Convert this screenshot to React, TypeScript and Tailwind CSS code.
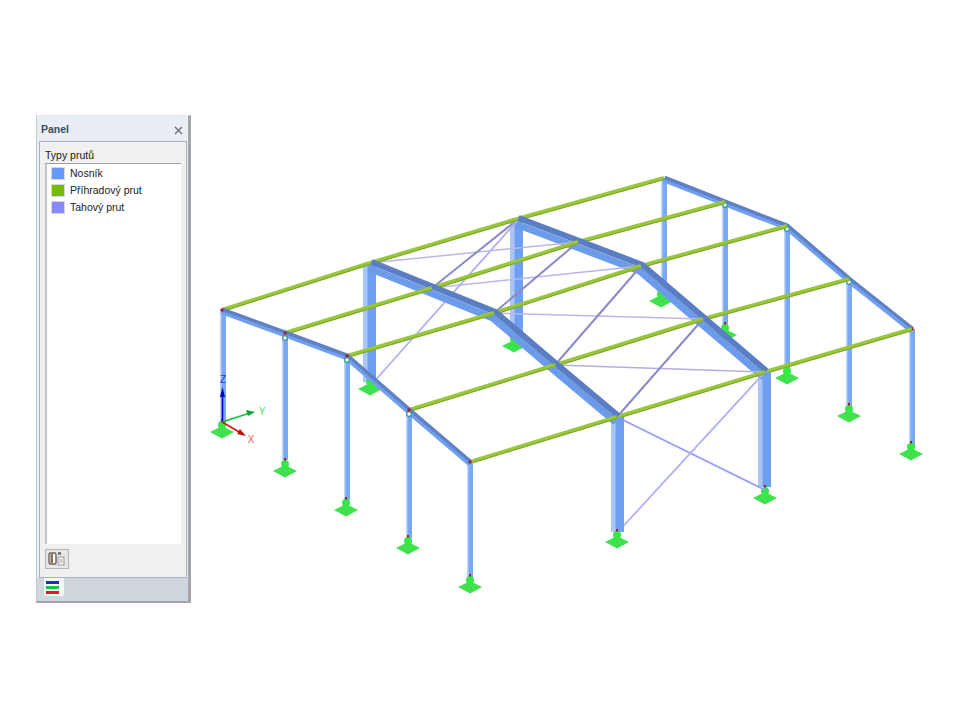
import React from 'react';

type Pt = [number, number];

// model coordinates are page pixels, the svg starts at x=191
const frameA: Pt[] = [[222, 310], [285, 333], [347, 356], [409, 410], [470, 462]];
const frameB: Pt[] = [[370, 263], [432, 288], [494, 313], [555, 365], [617, 417]];
const frameC: Pt[] = [[517, 219], [578, 242], [641, 266], [703, 319], [765, 372]];
const frameD: Pt[] = [[664, 178], [725, 202], [787, 226], [849, 279], [912, 329]];

const line = (pts: Pt[], dx: number, dy: number) => pts.map(([x, y]) => `${x + dx},${y + dy}`).join(' ');

const Base = ({ x, y }: { x: number; y: number }) => (
  <g>
    <polygon points={`${x - 12},${y} ${x},${y - 6} ${x + 12},${y} ${x},${y + 6.5}`} fill="#3fe24c" />
    <circle cx={x} cy={y - 7} r={4} fill="#35e845" />
    <rect x={x - 1} y={y - 13} width={2} height={2.5} fill="#a02030" />
  </g>
);

const Column = ({ x, top, bottom, wide }: { x: number; top: number; bottom: number; wide?: boolean }) =>
  wide ? (
    <g>
      <rect x={x - 7} y={top} width={13} height={bottom - top} fill="#6e9ff0" />
      <rect x={x - 7} y={top} width={4} height={bottom - top} fill="#a9c6f9" />
      <rect x={x - 3} y={top} width={1} height={bottom - top} fill="#8fb4f5" />
    </g>
  ) : (
    <g>
      <rect x={x - 3} y={top} width={6} height={bottom - top} fill="#7aa8f5" />
      <rect x={x - 3} y={top} width={1.5} height={bottom - top} fill="#bcd3fa" />
    </g>
  );

const Beam = ({ pts, wide }: { pts: Pt[]; wide?: boolean }) => (
  <g fill="none" strokeLinejoin="round">
    {wide ? (
      <>
        <polyline points={line(pts, -1.3, 5)} stroke="#6c9bea" strokeWidth={7} />
        <polyline points={line(pts, 1.5, -1)} stroke="#5a7dc4" strokeWidth={6} />
      </>
    ) : (
      <>
        <polyline points={line(pts, -0.7, 2.4)} stroke="#6e9ff0" strokeWidth={3.5} />
        <polyline points={line(pts, 0.7, -0.5)} stroke="#5f80c4" strokeWidth={3.5} />
      </>
    )}
  </g>
);

const Purlins = ({ from, to }: { from: Pt[]; to: Pt[] }) => (
  <g>
    {from.map((p, i) => (
      <g key={i}>
        <line x1={p[0]} y1={p[1]} x2={to[i][0]} y2={to[i][1]} stroke="#9ac63c" strokeWidth={4} />
        <line x1={p[0]} y1={p[1] + 1.5} x2={to[i][0]} y2={to[i][1] + 1.5} stroke="#7da52e" strokeWidth={1} />
      </g>
    ))}
  </g>
);

const Rod = ({ a, b, color, w = 1.5 }: { a: Pt; b: Pt; color: string; w?: number }) => (
  <line x1={a[0]} y1={a[1]} x2={b[0]} y2={b[1]} stroke={color} strokeWidth={w} />
);

const Hinge = ({ x, y }: { x: number; y: number }) => (
  <circle cx={x} cy={y} r={2.4} fill="#ffffff" stroke="#2a9a9a" strokeWidth={1.2} />
);

const NodeDot = ({ p }: { p: Pt }) => <rect x={p[0] - 1.5} y={p[1] - 1.5} width={3} height={3} fill="#a02030" />;

const Model = () => (
  <svg className="block w-[769px] h-[720px] shrink-0" viewBox="191 0 769 720">
    {/* back frame */}
    <Column x={664} top={178} bottom={296} />
    <Column x={725} top={202} bottom={330} />
    <Column x={787} top={226} bottom={372} />
    <Column x={849} top={279} bottom={406} />
    <Column x={912} top={329} bottom={445} />
    <Base x={661} y={301} />
    <Base x={725} y={335} />
    <Base x={787} y={378} />
    <Base x={849} y={416} />
    <Base x={911} y={454} />
    <Beam pts={frameD} />
    <Hinge x={725} y={205} />
    <Hinge x={787} y={229} />
    <Hinge x={849} y={282} />
    <NodeDot p={frameD[4]} />
    <Purlins from={frameC} to={frameD} />

    {/* second frame with the wider sections */}
    <Column x={517} top={219} bottom={338} wide />
    <Column x={765} top={372} bottom={487} wide />
    <Base x={514} y={346} />
    <Base x={765} y={498} />
    <Beam pts={frameC} wide />

    {/* bracing */}
    <Rod a={[370, 263]} b={[578, 242]} color="#b8b8ec" />
    <Rod a={[432, 288]} b={[517, 220]} color="#8a8ac8" w={2} />
    <Rod a={[432, 288]} b={[641, 266]} color="#b8b8ec" />
    <Rod a={[494, 313]} b={[578, 242]} color="#8a8ac8" w={2} />
    <Rod a={[494, 313]} b={[703, 319]} color="#b8b8ec" />
    <Rod a={[555, 365]} b={[641, 266]} color="#8a8ac8" w={2} />
    <Rod a={[555, 365]} b={[765, 372]} color="#b0b0e8" />
    <Rod a={[617, 417]} b={[703, 319]} color="#8a8ac8" w={2} />
    <Rod a={[372, 384]} b={[517, 221]} color="#b0b0f4" w={1.8} />
    <Rod a={[617, 417]} b={[765, 490]} color="#9a9af4" w={1.8} />
    <Rod a={[617, 533]} b={[765, 372]} color="#b0b0f4" w={1.8} />

    <Purlins from={frameB} to={frameC} />

    {/* first inner frame */}
    <Column x={370} top={263} bottom={382} wide />
    <Column x={618} top={417} bottom={532} wide />
    <Base x={370} y={389} />
    <Base x={617} y={542} />
    <Beam pts={frameB} wide />
    <Purlins from={frameA} to={frameB} />

    {/* front frame */}
    <Column x={223} top={310} bottom={424} />
    <Column x={285} top={333} bottom={460} />
    <Column x={347} top={356} bottom={500} />
    <Column x={409} top={410} bottom={538} />
    <Column x={470} top={462} bottom={577} />
    <Base x={222} y={432} />
    <Base x={285} y={471} />
    <Base x={346} y={510} />
    <Base x={408} y={548} />
    <Base x={470} y={587} />
    <Beam pts={frameA} />
    <Hinge x={285} y={338} />
    <Hinge x={347} y={360} />
    <Hinge x={409} y={414} />
    {frameA.map((p, i) => (
      <NodeDot key={i} p={p} />
    ))}

    {/* axis cross */}
    <line x1={222.5} y1={422} x2={222.5} y2={392} stroke="#0000e0" strokeWidth={1.6} />
    <polygon points="222.5,387 220,397 225,397" fill="#0000c0" />
    <line x1={222} y1={422} x2={250} y2={413} stroke="#10c040" strokeWidth={1.6} />
    <polygon points="255,412 246,410 248,416" fill="#10a030" />
    <line x1={222} y1={422} x2={241} y2={433} stroke="#e01010" strokeWidth={1.6} />
    <polygon points="246,436 240,429 237,434" fill="#c01010" />
    <text x={223} y={383} textAnchor="middle" fontSize={10} fill="#2040e0" className="font-['Liberation_Sans',sans-serif]">Z</text>
    <text x={262} y={415} textAnchor="middle" fontSize={10} fill="#40e060" className="font-['Liberation_Sans',sans-serif]">Y</text>
    <text x={251} y={443} textAnchor="middle" fontSize={10} fill="#f06060" className="font-['Liberation_Sans',sans-serif]">X</text>
  </svg>
);

const memberTypes = [
  { name: 'Nosník', color: 'bg-[#6699ff]' },
  { name: 'Příhradový prut', color: 'bg-[#77bb00]' },
  { name: 'Tahový prut', color: 'bg-[#8888ff]' },
];

const Panel = () => (
  <div className="mt-[115px] ml-[36px] w-[155px] h-[488px] shrink-0 flex flex-col bg-[#e9edf4] border-r-[3px] border-b-2 border-r-[#a2a6ab] border-b-[#a2a6ab] border-l border-l-[#c4cad2] border-t border-t-[#e4e8ee] font-['Liberation_Sans',sans-serif]">
    <div className="h-[25px] flex items-center justify-between pt-[3px] pl-[4px] pr-[5px] shrink-0">
      <span className="text-[10.5px] font-bold text-[#3d4d5f]">Panel</span>
      <svg width="9" height="9" viewBox="0 0 9 9">
        <path d="M1 1 L8 8 M8 1 L1 8" stroke="#6b6f75" strokeWidth="1.4" />
      </svg>
    </div>
    <div className="ml-[2px] mr-[1px] h-[437px] shrink-0 flex flex-col bg-[#f0f0f0] border border-[#aab2be] px-[5px] pt-[6px]">
      <div className="h-[16px] text-[10.5px] leading-[15px] text-[#1a1a1a] border-b border-[#a0a0a0] shrink-0">Typy prutů</div>
      <div className="h-[380px] shrink-0 bg-white border-l-2 border-[#c4c4c4] pt-[3px] pl-[4px] flex flex-col gap-[4px]">
        {memberTypes.map((item) => (
          <div key={item.name} className="h-[13px] flex items-center gap-[5px]">
            <div className={`w-[14px] h-[13px] border border-[#d8d8d8] ${item.color}`} />
            <span className="text-[10.5px] text-[#222222]">{item.name}</span>
          </div>
        ))}
      </div>
      <div className="mt-[5px] w-[24px] h-[20px] bg-[#e6e6e6] border border-[#b4b4b4] flex items-center justify-center">
        <svg width="18" height="16" viewBox="0 0 18 16">
          <rect x="1" y="2" width="7" height="11" rx="1.5" fill="#ffffff" stroke="#6b5f55" strokeWidth="1.4" />
          <rect x="2.5" y="3" width="2.5" height="9" fill="#8a6f55" />
          <rect x="10" y="1" width="3" height="3" fill="#7a7a7a" />
          <rect x="10" y="6" width="6" height="8" fill="#f4f4f4" stroke="#9a9a9a" />
          <path d="M11.5 9 H14.5 M11.5 11 H14.5" stroke="#9a9a9a" />
        </svg>
      </div>
    </div>
    <div className="flex-1 bg-[#d0d6de] pl-[6px]">
      <div className="w-[22px] h-[19px] bg-[#f4f8f8] border-x border-b border-[#bfdcdc] rounded-b-[3px] flex flex-col gap-[2px] pt-[3px] pl-[2px]">
        <div className="w-[13px] h-[3px] bg-[#1c2cc8]" />
        <div className="w-[13px] h-[3px] bg-[#18c83c]" />
        <div className="w-[13px] h-[3px] bg-[#e01c24]" />
      </div>
    </div>
  </div>
);

export default function App() {
  return (
    <div className="w-[960px] h-[720px] bg-white flex items-start overflow-hidden">
      <Panel />
      <Model />
    </div>
  );
}
